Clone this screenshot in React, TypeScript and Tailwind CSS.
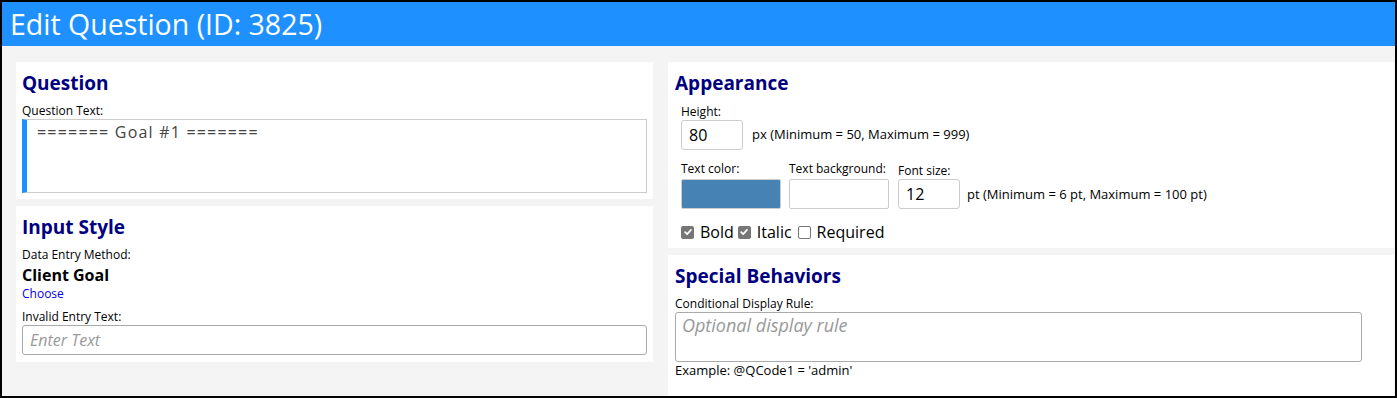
import React from 'react'

const font = { fontFamily: '"Open Sans", "Noto Sans", Arial, sans-serif' }

function Check({ checked }: { checked: boolean }) {
  if (!checked) {
    return (
      <span className="inline-block h-[13px] w-[13px] rounded-[2px] border border-[#767676] bg-white" />
    )
  }
  return (
    <span className="inline-flex h-[13px] w-[13px] items-center justify-center rounded-[2px] bg-[#767676]">
      <svg viewBox="0 0 12 12" className="h-[10px] w-[10px]">
        <path d="M2.5 6.2 L5 8.6 L9.6 3.4" fill="none" stroke="white" strokeWidth="2" strokeLinecap="round" strokeLinejoin="round" />
      </svg>
    </span>
  )
}

function Heading({ children }: { children: React.ReactNode }) {
  return <h2 className="text-[19px] font-bold leading-[26px] text-[#000080]">{children}</h2>
}

export default function App() {
  return (
    <div style={font} className="h-[398px] w-[1397px] overflow-hidden border-2 border-black bg-[#f4f4f4] text-black">
      <div className="h-[44px] bg-[#1e90ff] px-[8px] text-[28.5px] leading-[44px] text-white">
        Edit Question (ID: 3825)
      </div>

      <div className="flex gap-[15px] pl-[14px] pt-[16px]">
        {/* left column */}
        <div className="flex w-[637px] flex-col gap-[7px]">
          <section className="bg-white px-[6px] pb-[6px] pt-[8px]">
            <Heading>Question</Heading>
            <div className="mt-[7px] text-[12px] leading-[16px]">Question Text:</div>
            <div className="h-[74px] border border-l-[5px] border-[#cccccc] border-l-[#1e90ff] px-[10px] pt-[1px] text-[16px] leading-[22px] tracking-[1.2px] text-[#444]">
              ======= Goal #1 =======
            </div>
          </section>

          <section className="bg-white px-[6px] pb-[7px] pt-[8px]">
            <Heading>Input Style</Heading>
            <div className="mt-[7px] text-[12px] leading-[16px]">Data Entry Method:</div>
            <div className="mt-[2px] text-[16px] font-bold leading-[20px]">Client Goal</div>
            <a className="mt-[1px] block text-[12px] leading-[16px] text-[#0000ee]">Choose</a>
            <div className="mt-[7px] text-[12px] leading-[16px]">Invalid Entry Text:</div>
            <div className="flex h-[30px] items-center rounded-[3px] border border-[#aaaaaa] px-[7px] text-[16px] italic text-[#999]">
              Enter Text
            </div>
          </section>
        </div>

        {/* right column */}
        <div className="flex w-[726px] flex-col gap-[7px]">
          <section className="bg-white pb-[6px] pl-[7px] pt-[8px]">
            <Heading>Appearance</Heading>
            <div className="pl-[6px]">
              <div className="mt-[8px] text-[12px] leading-[16px]">Height:</div>
              <div className="flex items-center">
                <div className="flex h-[30px] w-[62px] items-center rounded-[3px] border border-[#cccccc] px-[7px] text-[16px]">
                  80
                </div>
                <span className="ml-[9px] text-[13px]">px (Minimum = 50, Maximum = 999)</span>
              </div>

              <div className="mt-[11px] flex items-end">
                <div className="flex flex-col">
                  <span className="mb-[2px] text-[12px] leading-[16px]">Text color:</span>
                  <div className="h-[30px] w-[100px] rounded-[2px] border border-[#cccccc] bg-[#4682b4]" />
                </div>
                <div className="ml-[8px] flex flex-col">
                  <span className="mb-[2px] text-[12px] leading-[16px]">Text background:</span>
                  <div className="h-[30px] w-[100px] rounded-[2px] border border-[#cccccc] bg-white" />
                </div>
                <div className="ml-[9px] flex flex-col">
                  <span className="text-[12px] leading-[16px]">Font size:</span>
                  <div className="flex h-[30px] w-[62px] items-center rounded-[3px] border border-[#cccccc] px-[7px] text-[16px]">
                    12
                  </div>
                </div>
                <span className="mb-[7px] ml-[7px] text-[13px] leading-[16px]">
                  pt (Minimum = 6 pt, Maximum = 100 pt)
                </span>
              </div>
            </div>

            <div className="mt-[13px] flex items-center text-[16px] leading-[20px]">
              <span className="ml-[6px] flex items-center gap-[6px]"><Check checked />Bold</span>
              <span className="ml-[4px] flex items-center gap-[6px]"><Check checked />Italic</span>
              <span className="ml-[6px] flex items-center gap-[6px]"><Check checked={false} />Required</span>
            </div>
          </section>

          <section className="h-[141px] bg-white pl-[7px] pt-[8px]">
            <Heading>Special Behaviors</Heading>
            <div className="mt-[7px] text-[12px] leading-[16px]">Conditional Display Rule:</div>
            <div className="h-[50px] w-[687px] rounded-[3px] border border-[#aaaaaa] px-[6px] text-[18px] italic leading-[24px] text-[#999]">
              Optional display rule
            </div>
            <div className="text-[13px] leading-[16px]">Example: @QCode1 = 'admin'</div>
          </section>
        </div>
      </div>
    </div>
  )
}
